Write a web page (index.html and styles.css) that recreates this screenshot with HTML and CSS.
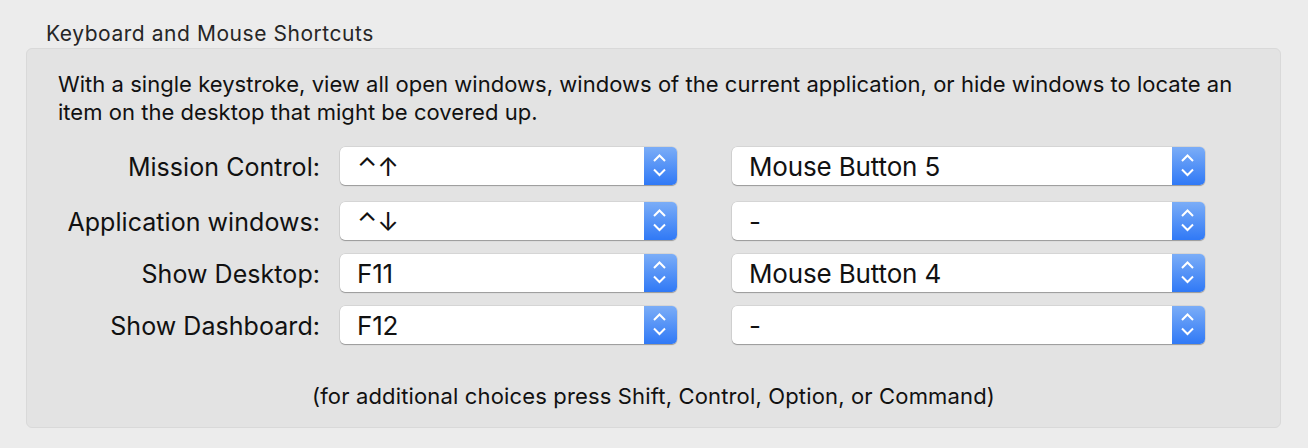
FILE: index.html
```html
<!DOCTYPE html>
<html>
<head>
<meta charset="utf-8">
<link rel="stylesheet" href="styles.css">
</head>
<body>
<div class="title">Keyboard and Mouse Shortcuts</div>
<div class="box">
  <p class="desc">With a single keystroke, view all open windows, windows of the current application, or hide windows to locate an item on the desktop that might be covered up.</p>
  <div class="rows">
    <div class="row first">
      <div class="label">Mission Control:</div>
      <div class="popup key"><span class="val">⌃↑</span><span class="step"><svg viewBox="0 0 33 38" width="33" height="38"><path d="M10 14 L15.5 8.5 L21 14 M10 22.5 L15.5 28 L21 22.5"/></svg></span></div>
      <div class="popup mouse"><span class="val">Mouse Button 5</span><span class="step"><svg viewBox="0 0 33 38" width="33" height="38"><path d="M10 14 L15.5 8.5 L21 14 M10 22.5 L15.5 28 L21 22.5"/></svg></span></div>
    </div>
    <div class="row">
      <div class="label">Application windows:</div>
      <div class="popup key"><span class="val">⌃↓</span><span class="step"><svg viewBox="0 0 33 38" width="33" height="38"><path d="M10 14 L15.5 8.5 L21 14 M10 22.5 L15.5 28 L21 22.5"/></svg></span></div>
      <div class="popup mouse"><span class="val">-</span><span class="step"><svg viewBox="0 0 33 38" width="33" height="38"><path d="M10 14 L15.5 8.5 L21 14 M10 22.5 L15.5 28 L21 22.5"/></svg></span></div>
    </div>
    <div class="row">
      <div class="label">Show Desktop:</div>
      <div class="popup key"><span class="val">F11</span><span class="step"><svg viewBox="0 0 33 38" width="33" height="38"><path d="M10 14 L15.5 8.5 L21 14 M10 22.5 L15.5 28 L21 22.5"/></svg></span></div>
      <div class="popup mouse"><span class="val">Mouse Button 4</span><span class="step"><svg viewBox="0 0 33 38" width="33" height="38"><path d="M10 14 L15.5 8.5 L21 14 M10 22.5 L15.5 28 L21 22.5"/></svg></span></div>
    </div>
    <div class="row">
      <div class="label">Show Dashboard:</div>
      <div class="popup key"><span class="val">F12</span><span class="step"><svg viewBox="0 0 33 38" width="33" height="38"><path d="M10 14 L15.5 8.5 L21 14 M10 22.5 L15.5 28 L21 22.5"/></svg></span></div>
      <div class="popup mouse"><span class="val">-</span><span class="step"><svg viewBox="0 0 33 38" width="33" height="38"><path d="M10 14 L15.5 8.5 L21 14 M10 22.5 L15.5 28 L21 22.5"/></svg></span></div>
    </div>
  </div>
  <p class="note">(for additional choices press Shift, Control, Option, or Command)</p>
</div>
</body>
</html>
```
FILE: styles.css
```css
html, body {
  margin: 0;
  padding: 0;
}
body {
  background: #ececec;
  font-family: Inter, "Liberation Sans", "DejaVu Sans", sans-serif;
  color: #111;
  width: 1308px;
  height: 448px;
  overflow: hidden;
}
.title {
  font-size: 21px;
  letter-spacing: 0.55px;
  line-height: 24px;
  color: #262626;
  padding: 22px 0 0 46px;
  height: 26px;
}
.box {
  margin: 0 27px 0 26px;
  height: 378px;
  background: #e3e3e3;
  border: 1px solid #d9d9d9;
  border-radius: 6px;
}
.desc {
  margin: 0;
  padding: 21px 30px 0 31px;
  font-size: 22px;
  letter-spacing: 0.03px;
  line-height: 28px;
}
.rows {
  margin-top: 21px;
  display: flex;
  flex-direction: column;
  gap: 14px;
}
.row {
  display: flex;
  align-items: center;
  height: 38px;
}
.row.first {
  margin-bottom: 3px;
}
.label {
  width: 293px;
  text-align: right;
  font-size: 25px;
  letter-spacing: 0.05px;
  margin-right: 20px;
  padding-top: 2px;
}
.popup {
  display: flex;
  height: 38px;
  background: #fff;
  border-radius: 5px;
  box-shadow: 0 1px 1px rgba(0, 0, 0, 0.28), 0 0 0 0.5px rgba(0, 0, 0, 0.12);
  font-size: 26px;
  letter-spacing: -0.15px;
}
.popup.key {
  width: 337px;
}
.popup.mouse {
  width: 473px;
  margin-left: 55px;
}
.val {
  flex: 1;
  padding: 2px 0 0 17px;
  line-height: 36px;
  white-space: nowrap;
}
.step {
  width: 33px;
  height: 38px;
  border-radius: 0 5px 5px 0;
  background: linear-gradient(#7badf7, #3079f6);
}
.step svg {
  display: block;
}
.step path {
  fill: none;
  stroke: #fff;
  stroke-width: 2;
}
.note {
  margin: 38px 0 0;
  text-align: center;
  font-size: 22px;
  letter-spacing: 0.15px;
  line-height: 28px;
}
```
